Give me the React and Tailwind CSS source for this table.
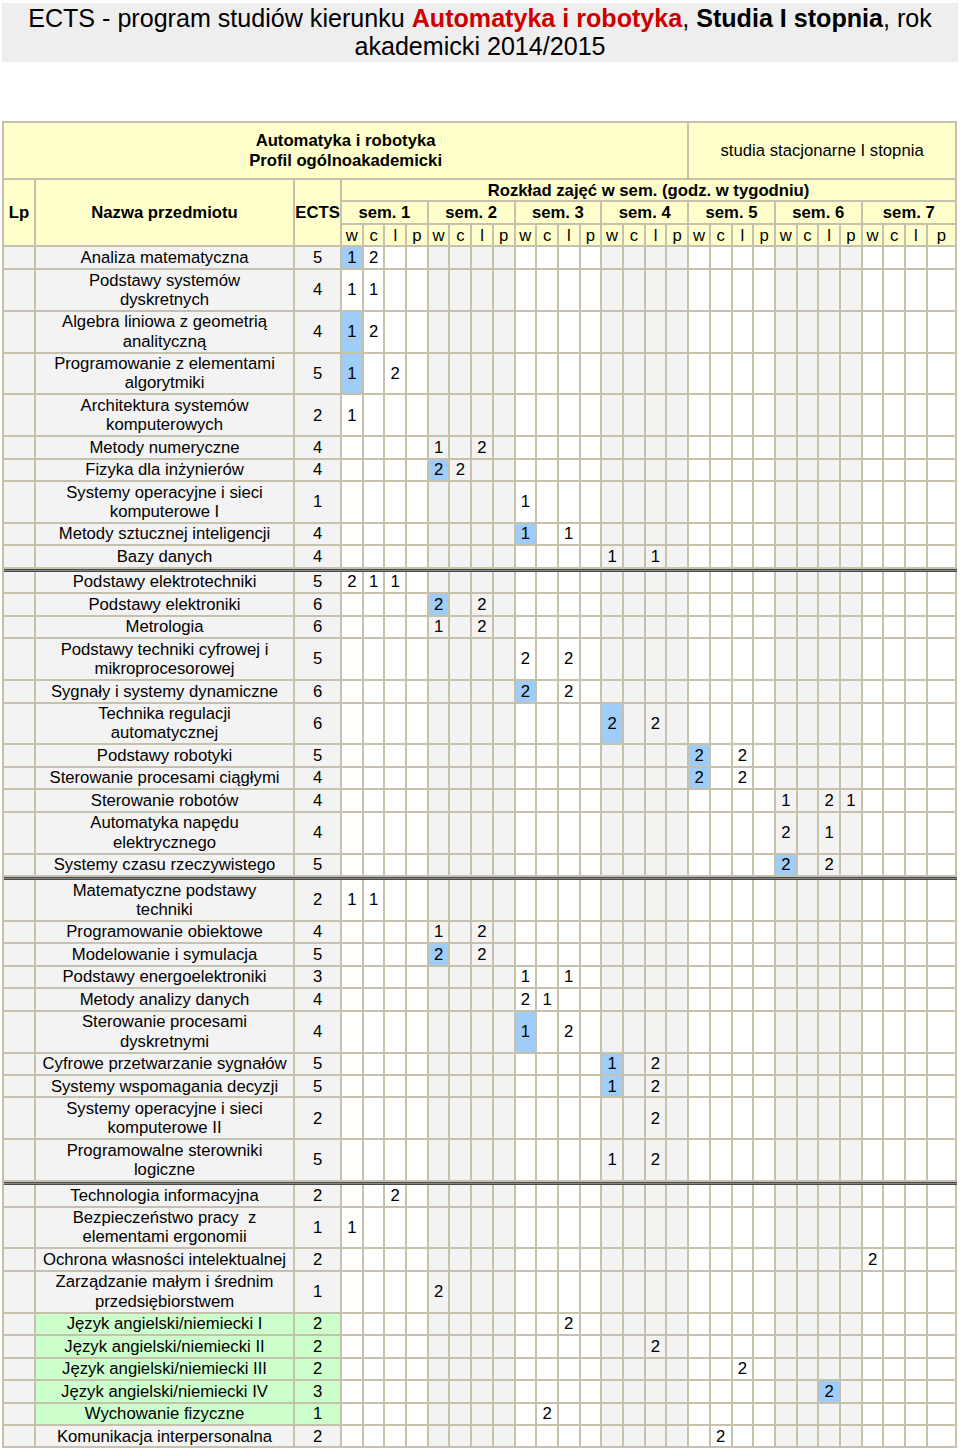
import React from 'react';

const BC = 'border-r-2 border-b-2 border-[#c5c1ad]';

const rows = [
  { n: ['Analiza matematyczna'], e: 5, c: { 0: '1*', 1: '2' } },
  { n: ['Podstawy systemów', 'dyskretnych'], e: 4, c: { 0: '1', 1: '1' } },
  { n: ['Algebra liniowa z geometrią', 'analityczną'], e: 4, c: { 0: '1*', 1: '2' } },
  { n: ['Programowanie z elementami', 'algorytmiki'], e: 5, c: { 0: '1*', 2: '2' } },
  { n: ['Architektura systemów', 'komputerowych'], e: 2, c: { 0: '1' } },
  { n: ['Metody numeryczne'], e: 4, c: { 4: '1', 6: '2' } },
  { n: ['Fizyka dla inżynierów'], e: 4, c: { 4: '2*', 5: '2' } },
  { n: ['Systemy operacyjne i sieci', 'komputerowe I'], e: 1, c: { 8: '1' } },
  { n: ['Metody sztucznej inteligencji'], e: 4, c: { 8: '1*', 10: '1' } },
  { n: ['Bazy danych'], e: 4, c: { 12: '1', 14: '1' } },
  'sep',
  { n: ['Podstawy elektrotechniki'], e: 5, c: { 0: '2', 1: '1', 2: '1' } },
  { n: ['Podstawy elektroniki'], e: 6, c: { 4: '2*', 6: '2' } },
  { n: ['Metrologia'], e: 6, c: { 4: '1', 6: '2' } },
  { n: ['Podstawy techniki cyfrowej i', 'mikroprocesorowej'], e: 5, c: { 8: '2', 10: '2' } },
  { n: ['Sygnały i systemy dynamiczne'], e: 6, c: { 8: '2*', 10: '2' } },
  { n: ['Technika regulacji', 'automatycznej'], e: 6, c: { 12: '2*', 14: '2' } },
  { n: ['Podstawy robotyki'], e: 5, c: { 16: '2*', 18: '2' } },
  { n: ['Sterowanie procesami ciągłymi'], e: 4, c: { 16: '2*', 18: '2' } },
  { n: ['Sterowanie robotów'], e: 4, c: { 20: '1', 22: '2', 23: '1' } },
  { n: ['Automatyka napędu', 'elektrycznego'], e: 4, c: { 20: '2', 22: '1' } },
  { n: ['Systemy czasu rzeczywistego'], e: 5, c: { 20: '2*', 22: '2' } },
  'sep',
  { n: ['Matematyczne podstawy', 'techniki'], e: 2, c: { 0: '1', 1: '1' } },
  { n: ['Programowanie obiektowe'], e: 4, c: { 4: '1', 6: '2' } },
  { n: ['Modelowanie i symulacja'], e: 5, c: { 4: '2*', 6: '2' } },
  { n: ['Podstawy energoelektroniki'], e: 3, c: { 8: '1', 10: '1' } },
  { n: ['Metody analizy danych'], e: 4, c: { 8: '2', 9: '1' } },
  { n: ['Sterowanie procesami', 'dyskretnymi'], e: 4, c: { 8: '1*', 10: '2' } },
  { n: ['Cyfrowe przetwarzanie sygnałów'], e: 5, c: { 12: '1*', 14: '2' } },
  { n: ['Systemy wspomagania decyzji'], e: 5, c: { 12: '1*', 14: '2' } },
  { n: ['Systemy operacyjne i sieci', 'komputerowe II'], e: 2, c: { 14: '2' } },
  { n: ['Programowalne sterowniki', 'logiczne'], e: 5, c: { 12: '1', 14: '2' } },
  'sep',
  { n: ['Technologia informacyjna'], e: 2, c: { 2: '2' } },
  { n: ['Bezpieczeństwo pracy\u00a0 z', 'elementami ergonomii'], e: 1, c: { 0: '1' } },
  { n: ['Ochrona własności intelektualnej'], e: 2, c: { 24: '2' } },
  { n: ['Zarządzanie małym i średnim', 'przedsiębiorstwem'], e: 1, c: { 4: '2' } },
  { n: ['Język angielski/niemiecki I'], e: 2, c: { 10: '2' }, g: true },
  { n: ['Język angielski/niemiecki II'], e: 2, c: { 14: '2' }, g: true },
  { n: ['Język angielski/niemiecki III'], e: 2, c: { 18: '2' }, g: true },
  { n: ['Język angielski/niemiecki IV'], e: 3, c: { 22: '2*' }, g: true },
  { n: ['Wychowanie fizyczne'], e: 1, c: { 9: '2' }, g: true },
  { n: ['Komunikacja interpersonalna'], e: 2, c: { 17: '2' } },
];

const sub = ['w', 'c', 'l', 'p'];
const idx = Array.from({ length: 28 }, (_, i) => i);

function Cell({ i, v }) {
  const hl = v && v.endsWith('*');
  const txt = v ? v.replace('*', '') : '';
  const sem = Math.floor(i / 4);
  let bg = sem % 2 === 0 ? 'bg-white' : 'bg-[#f3f3f3]';
  if (hl) bg = 'bg-[#9fcdf7]';
  return <td className={`${BC} ${bg} p-0 text-center align-middle`}>{txt}</td>;
}

export default function App() {
  return (
    <div className="w-[960px] bg-white text-black font-['Liberation_Sans',Arial,sans-serif]">
      <div className="mx-[2px] mt-[3px] bg-[#eeeeee] text-center text-[25.1px] leading-[28px] pt-[1px] pb-[2px]">
        ECTS - program studiów kierunku{' '}
        <span className="font-bold text-[#cc0000]">Automatyka i robotyka</span>,{' '}
        <span className="font-bold">Studia I stopnia</span>, rok akademicki 2014/2015
      </div>

      <table className="mt-[59px] ml-[2px] w-[955px] table-fixed border-separate border-spacing-0 border-l-2 border-t-2 border-[#c5c1ad] text-[16.7px] leading-[19.3px]">
        <colgroup>
          <col className="w-[32px]" />
          <col className="w-[259px]" />
          <col className="w-[47px]" />
          {idx.map((i) => (
            <col key={i} className={i === 27 ? 'w-[29.1px]' : 'w-[21.7px]'} />
          ))}
        </colgroup>
        <tbody>
          <tr className="bg-[#ffffcc]">
            <td colSpan={19} className={`${BC} pt-[7.5px] pb-[7.5px] leading-[20px] text-center font-bold`}>
              Automatyka i robotyka
              <br />
              Profil ogólnoakademicki
            </td>
            <td colSpan={12} className={`${BC} text-center align-middle`}>
              studia stacjonarne I stopnia
            </td>
          </tr>
          <tr className="bg-[#ffffcc]">
            <td rowSpan={3} className={`${BC} text-center align-middle font-bold`}>Lp</td>
            <td rowSpan={3} className={`${BC} text-center align-middle font-bold`}>Nazwa przedmiotu</td>
            <td rowSpan={3} className={`${BC} text-center align-middle font-bold whitespace-nowrap`}>ECTS</td>
            <td colSpan={28} className={`${BC} py-[0.6px] text-center font-bold`}>
              Rozkład zajęć w sem. (godz. w tygodniu)
            </td>
          </tr>
          <tr className="bg-[#ffffcc]">
            {[1, 2, 3, 4, 5, 6, 7].map((s) => (
              <td key={s} colSpan={4} className={`${BC} py-[0.6px] text-center font-bold whitespace-nowrap`}>
                sem. {s}
              </td>
            ))}
          </tr>
          <tr className="bg-[#ffffcc]">
            {idx.map((i) => (
              <td key={i} className={`${BC} py-[0.6px] text-center`}>
                {sub[i % 4]}
              </td>
            ))}
          </tr>
          {rows.map((r, k) =>
            r === 'sep' ? (
              <tr key={k}>
                <td colSpan={31} className="p-0">
                  <div className="h-[3px] bg-[#8a8a8a] border-y border-[#4a4a4a]" />
                </td>
              </tr>
            ) : (
              <tr key={k}>
                <td className={`${BC} bg-[#f3f3f3] p-0`}></td>
                <td className={`${BC} ${r.g ? 'bg-[#ccffcc]' : 'bg-[#f3f3f3]'} py-[0.6px] px-0 text-center align-middle whitespace-nowrap`}>
                  {r.n.map((l, j) => (
                    <React.Fragment key={j}>
                      {j > 0 && <br />}
                      {l}
                    </React.Fragment>
                  ))}
                </td>
                <td className={`${BC} ${r.g ? 'bg-[#ccffcc]' : 'bg-[#f3f3f3]'} p-0 text-center align-middle`}>{r.e}</td>
                {idx.map((i) => (
                  <Cell key={i} i={i} v={r.c[i]} />
                ))}
              </tr>
            )
          )}
        </tbody>
      </table>
    </div>
  );
}
